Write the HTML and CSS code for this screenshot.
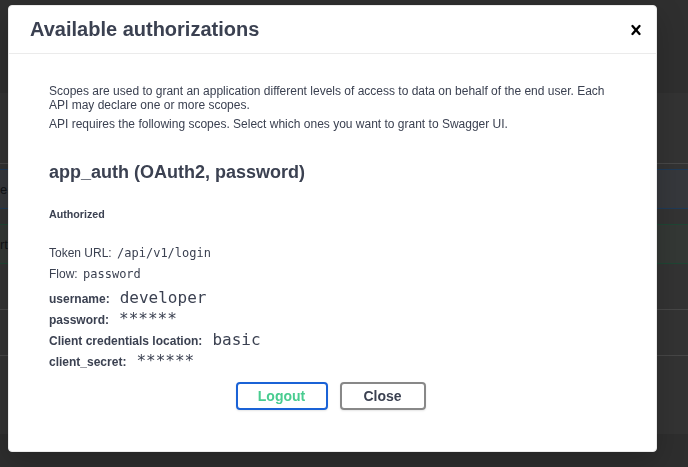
FILE: index.html
```html
<!DOCTYPE html>
<html lang="en">
<head>
<meta charset="utf-8">
<title>Available authorizations</title>
<link rel="stylesheet" href="styles.css">
</head>
<body>
<div class="page">
  <div class="topbar"></div>
  <div class="info"></div>
  <div class="tag-line"></div>
  <div class="spacer-sm"></div>
  <div class="opblock opblock-get"><div class="op-edge"><span class="op-summary">e</span></div></div>
  <div class="spacer-md"></div>
  <div class="opblock opblock-post"><div class="op-edge"><span class="op-summary">rt</span></div></div>
  <div class="section"></div>
  <div class="section"></div>
  <div class="section section-last"></div>
  <div class="footer"></div>
</div>

<div class="modal">
  <div class="modal-header">
    <h3 class="modal-title">Available authorizations</h3>
    <button class="close-modal" type="button" aria-label="Close">
      <svg width="20" height="20" viewBox="0 0 20 20" aria-hidden="true"><path d="M14.348 14.849a1.2 1.2 0 0 1-1.697 0L10 11.819l-2.651 3.029a1.2 1.2 0 1 1-1.697-1.697l2.758-3.15-2.759-3.152a1.2 1.2 0 1 1 1.697-1.697L10 8.183l2.651-3.031a1.2 1.2 0 1 1 1.697 1.697l-2.758 3.152 2.758 3.15a1.2 1.2 0 0 1 0 1.698z"/></svg>
    </button>
  </div>
  <div class="modal-content">
    <div class="auth-container">
      <div class="scope-def">
        <p>Scopes are used to grant an application different levels of access to data on behalf of the end user. Each API may declare one or more scopes.</p>
        <p>API requires the following scopes. Select which ones you want to grant to Swagger UI.</p>
      </div>
      <h4 class="auth-name">app_auth (OAuth2, password)</h4>
      <h6 class="auth-status">Authorized</h6>
      <p class="auth-line">Token URL: <code class="code-sm">/api/v1/login</code></p>
      <p class="auth-line">Flow: <code class="code-sm">password</code></p>
      <div class="field-row"><span class="field-label">username:</span><code class="code-lg">developer</code></div>
      <div class="field-row"><span class="field-label">password:</span><code class="code-lg">******</code></div>
      <div class="field-row"><span class="field-label">Client credentials location:</span><code class="code-lg">basic</code></div>
      <div class="field-row"><span class="field-label">client_secret:</span><code class="code-lg">******</code></div>
      <div class="auth-btn-wrapper">
        <button class="btn btn-logout" type="button">Logout</button>
        <button class="btn btn-close" type="button">Close</button>
      </div>
    </div>
  </div>
</div>
</body>
</html>
```
FILE: styles.css
```css
* { box-sizing: border-box; }

html, body {
  margin: 0;
  padding: 0;
  height: 100%;
  overflow: hidden;
  background: #333333;
  font-family: "Liberation Sans", Arial, Helvetica, sans-serif;
}

/* page behind the dimmed backdrop */
.page {
  display: flex;
  flex-direction: column;
  height: 467px;
  background: #333333;
}
.topbar { height: 93px; background: #2f2f2f; }
.info { height: 70px; }
.tag-line { height: 1px; background: #484848; }
.spacer-sm { height: 5px; }
.spacer-md { height: 15px; }
.opblock {
  height: 40px;
  display: flex;
  align-items: center;
}
.opblock-get {
  background: #36383c;
  border-top: 1px solid #1f3a57;
  border-bottom: 1px solid #1f3a57;
}
.opblock-post {
  background: #343835;
  border-top: 1px solid #1f4634;
  border-bottom: 1px solid #1f4634;
}
.op-edge {
  width: 8px;
  display: flex;
  justify-content: flex-start;
}
.op-summary {
  white-space: nowrap;
  font-size: 13px;
  color: #111317;
}
.section {
  height: 46px;
  border-bottom: 1px solid #474747;
}
.section-last { height: 78px; border-bottom: 0; }
.footer { flex: 1; background: #2e2e2e; }

/* modal */
.modal {
  position: fixed;
  top: 5px;
  left: 8px;
  width: 649px;
  background: #ffffff;
  border: 1px solid #ebebeb;
  border-radius: 4px;
  box-shadow: 0 10px 30px 0 rgba(0, 0, 0, 0.2);
}
.modal-header {
  display: flex;
  align-items: center;
  padding: 12px 0;
  border-bottom: 1px solid #ebebeb;
}
.modal-title {
  flex: 1;
  margin: 0;
  padding: 0 21px;
  font-size: 20px;
  line-height: 23px;
  font-weight: 700;
  color: #3b4151;
}
.close-modal {
  border: 0;
  background: none;
  padding: 0 10px;
  margin: 0;
  display: flex;
  cursor: pointer;
}
.close-modal svg { width: 20px; height: 20px; fill: #000000; }

.modal-content { padding: 20px; }
.auth-container { padding: 10px 20px; }

.scope-def { padding-bottom: 20px; }
.scope-def p {
  margin: 0 0 5px;
  font-size: 12px;
  line-height: 14px;
  color: #3b4151;
}

.auth-name {
  margin: 6px 0 0;
  font-size: 18px;
  line-height: 21px;
  font-weight: 700;
  color: #3b4151;
}
.auth-status {
  margin: 25px 0 25px;
  font-size: 10.7px;
  line-height: 12px;
  font-weight: 700;
  color: #3b4151;
}
.auth-line {
  margin: 0 0 5px;
  font-size: 12px;
  line-height: 16px;
  color: #3b4151;
}
.code-sm {
  font-family: "DejaVu Sans Mono", "Liberation Mono", monospace;
  font-size: 12px;
  color: #3b4151;
  margin-left: 2px;
}
.field-row {
  height: 21px;
  display: flex;
  align-items: baseline;
  line-height: 21px;
}
.auth-line + .field-row { margin-top: 1px; }
.field-label {
  font-size: 12px;
  font-weight: 700;
  color: #3b4151;
}
.code-lg {
  font-family: "DejaVu Sans Mono", "Liberation Mono", monospace;
  font-size: 16px;
  color: #3b4151;
  margin-left: 10px;
}

.auth-btn-wrapper {
  display: flex;
  justify-content: center;
  gap: 12px;
  padding: 11px 4px 11px 0;
}
.btn {
  height: 28px;
  padding: 0;
  border: 2px solid #888888;
  border-radius: 4px;
  background: transparent;
  box-shadow: 0 1px 2px rgba(0, 0, 0, 0.1);
  font-family: "Liberation Sans", Arial, Helvetica, sans-serif;
  font-size: 14px;
  font-weight: 700;
  color: #3b4151;
  cursor: pointer;
}
.btn-logout {
  width: 92px;
  border-color: #1a62d6;
  color: #49cc90;
}
.btn-close { width: 86px; }
```
